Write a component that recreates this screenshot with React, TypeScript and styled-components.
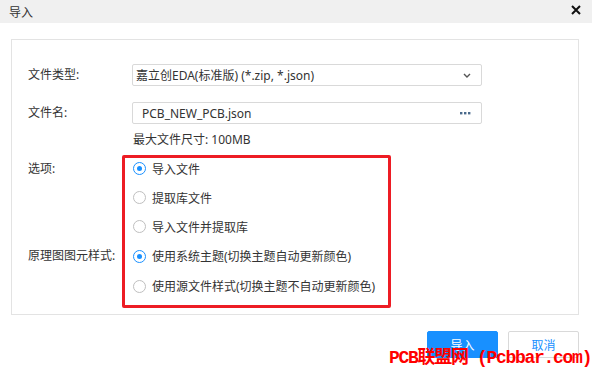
import { FC } from 'react';
import styled, { createGlobalStyle } from 'styled-components';

const GlobalStyle = createGlobalStyle`
    html, body {
        margin: 0;
        padding: 0;
        background: #fff;
    }
    body {
        font-family: "Noto Sans", "Noto Sans CJK SC", sans-serif;
        font-size: 12px;
        color: #333;
    }
`;

const Dialog = styled.div`
    position: relative;
    width: 592px;
    height: 375px;
    background: #fff;
    overflow: hidden;
`;

const TitleBar = styled.div`
    height: 23px;
    background: #f0f0f0;
    display: flex;
    align-items: center;
    justify-content: space-between;
    padding: 0 10px 0 9px;
    font-size: 12px;
    color: #333;
`;

const CloseButton = styled.button`
    border: 0;
    background: transparent;
    padding: 0;
    width: 12px;
    height: 12px;
    display: flex;
    align-items: center;
    justify-content: center;
    margin-top: -3px;
    cursor: pointer;
`;

const Panel = styled.div`
    position: relative;
    margin: 16px 13px 0 11px;
    border: 1px solid #e3e3e3;
    padding: 24px 0 13px 16px;
`;

const Row = styled.div<{ $gap?: number }>`
    display: grid;
    grid-template-columns: 104px 1fr;
    align-items: center;
    margin-bottom: ${p => p.$gap ?? 0}px;
`;

const Label = styled.div<{ $top?: boolean }>`
    line-height: 16px;
    color: #333;
    align-self: ${p => p.$top ? 'start' : 'center'};
    padding-top: ${p => p.$top ? '7px' : '0'};
`;

const Field = styled.div`
    box-sizing: content-box;
    width: 335px;
    height: 20px;
    border: 1px solid #d9d9d9;
    border-radius: 2px;
    display: flex;
    align-items: center;
    justify-content: space-between;
    padding: 0 10px 0 3px;
    color: #333;
`;

const FieldText = styled.span<{ $indent?: number }>`
    padding-left: ${p => p.$indent ?? 0}px;
    white-space: nowrap;
`;

const Hint = styled.div`
    line-height: 16px;
    margin-top: 8px;
    margin-bottom: 6px;
    padding-left: 1px;
`;

const RadioList = styled.div`
    display: flex;
    flex-direction: column;
`;

const RadioRow = styled.label<{ $h: number }>`
    height: ${p => p.$h}px;
    display: flex;
    align-items: center;
    gap: 6px;
    padding-left: 1px;
    white-space: nowrap;
`;

const RadioDot = styled.span<{ $checked?: boolean }>`
    width: 11px;
    height: 11px;
    border-radius: 50%;
    border: 1px solid ${p => p.$checked ? '#1890ff' : '#bfbfbf'};
    background: #fff;
    display: flex;
    align-items: center;
    justify-content: center;
    flex-shrink: 0;
    &::after {
        content: '';
        width: 5px;
        height: 5px;
        border-radius: 50%;
        background: ${p => p.$checked ? '#1890ff' : 'transparent'};
    }
`;

// 截图里的红色标注框
const Highlight = styled.div`
    position: absolute;
    left: 110px;
    top: 115px;
    width: 263px;
    height: 147px;
    border: 3px solid #ed1c24;
    border-radius: 2px;
    pointer-events: none;
`;

const Footer = styled.div`
    display: flex;
    justify-content: flex-end;
    gap: 10px;
    margin-top: 16px;
    padding-right: 13px;
`;

const Button = styled.button<{ $primary?: boolean }>`
    width: 71px;
    height: 27px;
    border-radius: 2px;
    font-family: inherit;
    font-size: 12px;
    border: 1px solid ${p => p.$primary ? '#1890ff' : '#d9d9d9'};
    background: ${p => p.$primary ? '#1890ff' : '#fff'};
    color: ${p => p.$primary ? '#fff' : '#1890ff'};
    padding: 0;
`;

const Watermark = styled.div`
    position: absolute;
    left: 389px;
    top: 345px;
    color: #ff0000;
    font-family: "Liberation Mono", "Noto Sans CJK SC", monospace;
    font-weight: bold;
    font-size: 18px;
    letter-spacing: -1.3px;
    line-height: 26px;
    white-space: nowrap;
    pointer-events: none;
`;

const options = ['导入文件', '提取库文件', '导入文件并提取库'];
const styles = ['使用系统主题(切换主题自动更新颜色)', '使用源文件样式(切换主题不自动更新颜色)'];

const App: FC = () => {
    return (
        <Dialog>
            <GlobalStyle />
            <TitleBar>
                <span>导入</span>
                <CloseButton>
                    <svg width="10" height="10" viewBox="0 0 10 10">
                        <path d="M1 1 L9 9 M9 1 L1 9" stroke="#111" strokeWidth="2" />
                    </svg>
                </CloseButton>
            </TitleBar>
            <Panel>
                <Row $gap={16}>
                    <Label>文件类型:</Label>
                    <Field>
                        <FieldText>嘉立创EDA(标准版) (*.zip, *.json)</FieldText>
                        <svg width="8" height="5" viewBox="0 0 8 5">
                            <path d="M1 1 L4 4 L7 1" stroke="#555" strokeWidth="1.4" fill="none" />
                        </svg>
                    </Field>
                </Row>
                <Row>
                    <Label>文件名:</Label>
                    <Field>
                        <FieldText $indent={6}>PCB_NEW_PCB.json</FieldText>
                        <svg width="11" height="3" viewBox="0 0 11 3">
                            <rect x="0" y="0" width="2.4" height="2.4" fill="#4a6a8c" />
                            <rect x="4" y="0" width="2.4" height="2.4" fill="#4a6a8c" />
                            <rect x="8" y="0" width="2.4" height="2.4" fill="#4a6a8c" />
                        </svg>
                    </Field>
                </Row>
                <Row>
                    <span />
                    <Hint>最大文件尺寸: 100MB</Hint>
                </Row>
                <Row>
                    <Label $top>选项:</Label>
                    <RadioList>
                        {options.map((o, i) => (
                            <RadioRow key={o} $h={29}>
                                <RadioDot $checked={i === 0} />
                                {o}
                            </RadioRow>
                        ))}
                    </RadioList>
                </Row>
                <Row>
                    <Label $top>原理图图元样式:</Label>
                    <RadioList>
                        {styles.map((s, i) => (
                            <RadioRow key={s} $h={30}>
                                <RadioDot $checked={i === 0} />
                                {s}
                            </RadioRow>
                        ))}
                    </RadioList>
                </Row>
                <Highlight />
            </Panel>
            <Footer>
                <Button $primary>导入</Button>
                <Button>取消</Button>
            </Footer>
            <Watermark>PCB联盟网 (Pcbbar.com)</Watermark>
        </Dialog>
    );
};

export default App;
